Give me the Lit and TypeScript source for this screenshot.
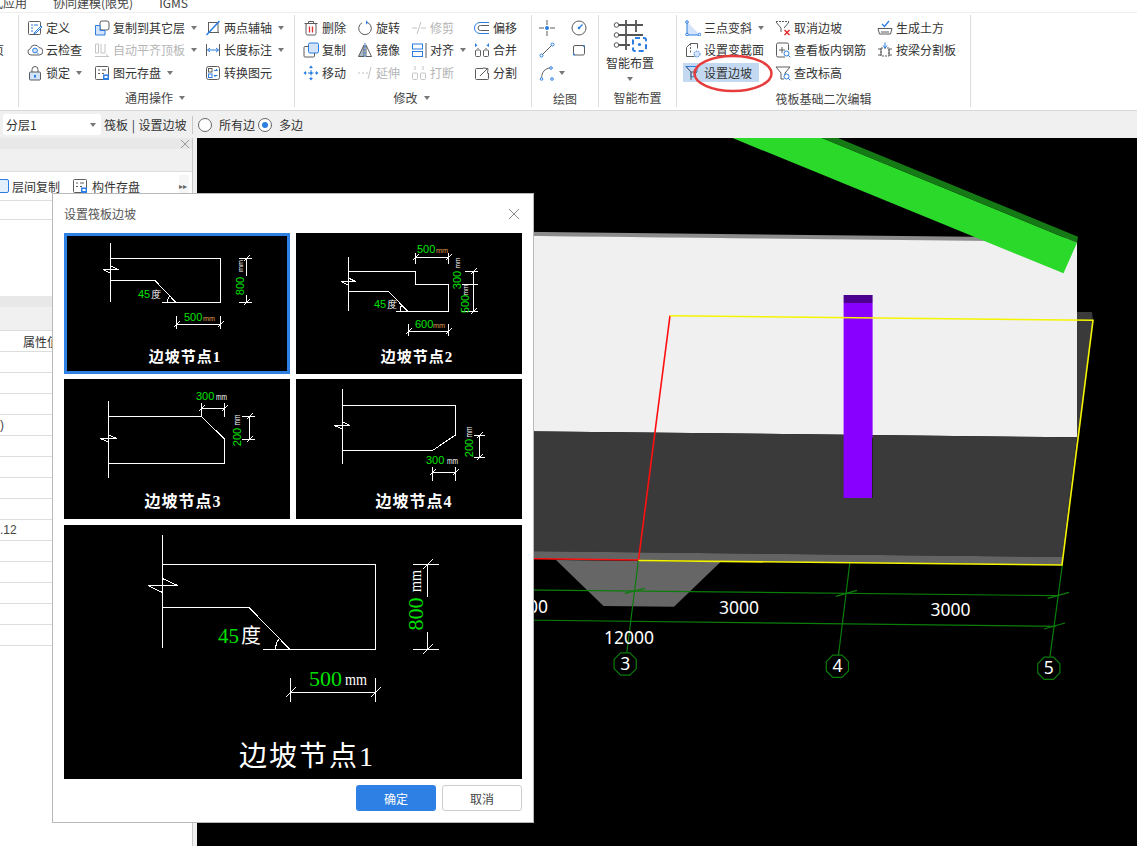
import { LitElement, html, svg, css, nothing } from "lit";
import { customElement } from "lit/decorators.js";

const D = "#5c5c5c";
const B = "#2b7de0";
const L = "#d3e4fa";
const G = "#c4c4c4";

const ICONS: Record<string, any> = {
  define: svg`<rect x="1.5" y="1.5" width="12" height="13" rx="1" fill="none" stroke="${D}"/><path d="M4 5h2M7 5h4M4 8h2M4 11h2" stroke="${B}" fill="none"/><path d="M8 12l6-6 1 1-6 6-2 .5z" fill="#fff" stroke="${B}"/>`,
  cloud: svg`<path d="M4 13a3.2 3.2 0 0 1-.6-6.3A4.6 4.6 0 0 1 12 5.6 3.7 3.7 0 0 1 12.2 13z" fill="none" stroke="${D}"/><circle cx="8" cy="8.5" r="2.4" fill="${L}" stroke="${B}"/><path d="M10 10.5l1.8 1.8" stroke="${B}"/>`,
  lock: svg`<path d="M5 7V4.5a3 3 0 0 1 6 0V7" fill="none" stroke="${D}"/><rect x="2.5" y="7" width="11" height="8" rx="1" fill="${L}" stroke="${D}"/><path d="M8 10v2.5" stroke="${B}" stroke-width="2"/>`,
  copyLayer: svg`<rect x="6" y="1" width="9" height="9" rx="2" fill="#fff" stroke="${D}"/><path d="M1.5 5.5h4.5v5h5v4.500h-9.500z" fill="${L}" stroke="${B}"/>`,
  autoAlign: svg`<path d="M1.500 2v9M1.500 2h3v9h-3M7 2v9h4V2M1 14.500h14M12 12l2 2.500" stroke="${G}" fill="none"/>`,
  saveEl: svg`<rect x="1.500" y="1.500" width="13" height="13" rx="1" fill="none" stroke="${D}"/><path d="M4 5h2M8 5h4M4 8.500h2M8 8.500h2" stroke="${D}"/><rect x="9" y="9.500" width="6" height="5.500" fill="${B}"/><rect x="10.500" y="11" width="3" height="2" fill="#fff"/>`,
  twoAxis: svg`<path d="M3 2.500h11M3 12.500h11M13 2v11M3.500 2v11" stroke="${D}" fill="none"/><path d="M1.500 15L14.500 1" stroke="${B}" stroke-width="1.500"/>`,
  lenDim: svg`<path d="M1.500 2v12M14.500 2v12" stroke="${D}"/><path d="M2.500 8h11M5 6L2.500 8 5 10M11 6l2.500 2L11 10" fill="none" stroke="${B}"/>`,
  convert: svg`<rect x="1.500" y="1.500" width="13" height="13" rx="2" fill="none" stroke="${D}"/><rect x="3.500" y="3.500" width="3.500" height="3.500" fill="none" stroke="${D}"/><rect x="3.500" y="9" width="3.500" height="3.500" fill="none" stroke="${B}"/><path d="M9 5.500h3.500M12.500 5.500l-1.500-1.500M12.500 10.500H9M9 10.500l1.500 1.500" fill="none" stroke="${B}"/>`,
  del: svg`<path d="M1.500 3.500h13M5.500 3.500V1.500h5v2" fill="none" stroke="${D}"/><rect x="3" y="3.500" width="10" height="11.500" rx="1.500" fill="none" stroke="${D}"/><path d="M6.500 6.500v6M9.500 6.500v6" stroke="#e03030" stroke-width="1.300"/>`,
  rotate: svg`<path d="M9.500 2.200A6.300 6.300 0 1 1 5 2.800" fill="none" stroke="${D}"/><path d="M9 .5l2.200 2-2.200 2z" fill="${B}"/>`,
  trim: svg`<path d="M1 8h5M10 8h5M10 2L6 14" stroke="${G}" fill="none"/>`,
  offset: svg`<path d="M15 2.500H6a5.500 5.500 0 0 0 0 11h9" fill="none" stroke="${B}"/><path d="M15 5.500H6.500a2.500 2.500 0 0 0 0 5H15" fill="none" stroke="${D}"/>`,
  copy: svg`<rect x="5.500" y="1" width="10" height="10" rx="1.500" fill="${L}" stroke="${B}"/><path d="M5.500 4.500H2a1 1 0 0 0-1 1V14a1 1 0 0 0 1 1h8.500a1 1 0 0 0 1-1v-3" fill="none" stroke="${D}"/>`,
  mirror: svg`<path d="M7 3L1.500 14.500H7z" fill="#a9b9cc" stroke="${D}"/><path d="M9 3l5.500 11.500H9z" fill="#fff" stroke="${D}"/><path d="M8 1v15" stroke="${B}" stroke-dasharray="2 1"/>`,
  align: svg`<rect x="1.500" y="2" width="10" height="5" fill="none" stroke="${B}"/><rect x="1.500" y="9.500" width="10" height="5" fill="none" stroke="${B}"/><path d="M15 1v15" stroke="${D}"/>`,
  merge: svg`<path d="M1 1l2.500 2.500L1 5zM15 1l-2.500 2.500L15 5z" fill="${B}"/><rect x="1.500" y="8" width="5" height="6.500" rx="1" fill="none" stroke="${D}"/><rect x="9.500" y="8" width="5" height="6.500" rx="1" fill="none" stroke="${D}"/><path d="M4 6v1M12 6v1" stroke="${D}"/>`,
  move: svg`<path d="M8 1.500v13M1.500 8h13" stroke="${B}" stroke-dasharray="2 1.500"/><path d="M8 .5l2 2.500H6zM8 15.500L6 13h4zM.5 8L3 6v4zM15.500 8L13 10V6z" fill="${B}"/><circle cx="8" cy="8" r="1.200" fill="${B}"/>`,
  extend: svg`<path d="M1 8h2M5 8h2M9 8h2M14 2l-3 12" stroke="${G}" fill="none"/>`,
  breakIt: svg`<path d="M4 1v4M12 1v4" stroke="${G}"/><rect x="1.500" y="8" width="5" height="6.500" rx="1" fill="none" stroke="${G}"/><rect x="9.500" y="8" width="5" height="6.500" rx="1" fill="none" stroke="${G}"/>`,
  split: svg`<path d="M9 3.500H2.500a1 1 0 0 0-1 1v9a1 1 0 0 0 1 1h11a1 1 0 0 0 1-1V8" fill="none" stroke="${D}"/><path d="M6 11l7-7M9 3l5 .5-.5 5" fill="none" stroke="${D}"/>`,
  point: svg`<path d="M0 8h5M11 8h5M8 0v5M8 11v5" stroke="${D}"/><circle cx="8" cy="8" r="2" fill="${B}"/>`,
  measure: svg`<circle cx="8" cy="8" r="7" fill="none" stroke="${D}"/><path d="M8 8l3.500-3.500" stroke="${B}" stroke-width="1.300"/><circle cx="8" cy="8" r="1.300" fill="${B}"/>`,
  line: svg`<path d="M2.500 13.500l11-11" stroke="${D}"/><circle cx="2.500" cy="13.500" r="1.500" fill="#fff" stroke="${B}"/><circle cx="13.500" cy="2.500" r="1.500" fill="#fff" stroke="${B}"/>`,
  rect: svg`<rect x="2.500" y="3.500" width="11" height="9.500" rx="1.500" fill="none" stroke="${D}"/><circle cx="13" cy="4" r="1" fill="${B}"/><circle cx="3" cy="12.500" r="1" fill="${B}"/>`,
  arc: svg`<path d="M2.500 14C2.500 7 6 3.500 11 3" fill="none" stroke="${D}"/><circle cx="2.500" cy="14" r="1.300" fill="#fff" stroke="${B}"/><circle cx="12" cy="3" r="1.300" fill="#fff" stroke="${B}"/><circle cx="13" cy="14" r="1.300" fill="#fff" stroke="${B}"/>`,
  threePt: svg`<path d="M2 1.500V15h13z" fill="${L}"/><path d="M2 1.500V15h13" fill="none" stroke="${B}"/><circle cx="2" cy="2" r="1.300" fill="#fff" stroke="${B}"/><circle cx="2" cy="14.500" r="1.300" fill="#fff" stroke="${B}"/><circle cx="14.500" cy="14.500" r="1.300" fill="#fff" stroke="${B}"/>`,
  cancel: svg`<path d="M1 1.500h13" stroke="${D}" stroke-dasharray="2 1"/><path d="M1 2l5 6v4M14 2L9 8" fill="none" stroke="${D}"/><path d="M9.500 10l5 5M14.500 10l-5 5" stroke="#e02020" stroke-width="1.300"/>`,
  earth: svg`<path d="M1 8.500h14l-1.500 5.500h-11z" fill="none" stroke="${D}"/><path d="M4 12h8" stroke="${D}"/><path d="M5 4l2.500 2.500L12 1" fill="none" stroke="${B}" stroke-width="1.300"/>`,
  section: svg`<path d="M1.500 5.500l4-4h7v5M1.500 5.500v9h8" fill="none" stroke="${D}"/><path d="M5.500 1.500v9" stroke="${D}" stroke-dasharray="2 1.500"/><circle cx="12" cy="12" r="3" fill="${L}" stroke="${B}" stroke-dasharray="1.500 1"/>`,
  rebar: svg`<path d="M10 15H3a1.500 1.500 0 0 1-1.500-1.500v-11A1.500 1.500 0 0 1 3 1h9a1.500 1.500 0 0 1 1.500 1.500V8" fill="none" stroke="${D}"/><path d="M4 8h6M7 5v6" stroke="${D}"/><circle cx="11.500" cy="11.500" r="2.500" fill="#fff" stroke="${B}"/><path d="M13.300 13.300l2 2" stroke="${B}"/>`,
  beamSplit: svg`<path d="M1 7h3v6H1M15 7h-3v6h3" fill="none" stroke="${D}"/><rect x="4" y="6" width="8" height="8" fill="none" stroke="${D}" stroke-dasharray="2 1"/><path d="M8 .5V6M6 3.500L8 6l2-2.500" fill="none" stroke="${B}"/>`,
  slope: svg`<path d="M1 1.500h11v5L8 12H6V7L1 1.500z" fill="none" stroke="${B}"/><path d="M1 1.500L6 7h6" fill="none" stroke="${D}"/><path d="M6 7v8" stroke="${D}"/>`,
  elev: svg`<path d="M1 2h14L10 8v3" fill="none" stroke="${D}"/><path d="M1 2l5 6v6h3" fill="none" stroke="${D}"/><circle cx="11.500" cy="11.500" r="2.500" fill="#fff" stroke="${B}"/><path d="M13.300 13.300l2 2" stroke="${B}"/>`,
};

const icon = (n: string) => html`<svg class="ic" viewBox="0 0 16 16">${ICONS[n]}</svg>`;

type Btn = [string, string, boolean?, string?];
interface Group {
  cols: string;
  pad: number;
  width: number;
  foot: string;
  caret?: boolean;
  low?: boolean;
  items: Btn[];
}

const GROUPS: Group[] = [
  {
    cols: "67px 111px 89px", pad: 8, width: 275, foot: "通用操作", caret: true,
    items: [
      ["define", "定义"], ["cloud", "云检查"], ["lock", "锁定", true],
      ["copyLayer", "复制到其它层", true], ["autoAlign", "自动平齐顶板", true, "off"], ["saveEl", "图元存盘", true],
      ["twoAxis", "两点辅轴", true], ["lenDim", "长度标注", true], ["convert", "转换图元"],
    ],
  },
  {
    cols: "54px 54px 63px 57px", pad: 8, width: 236, foot: "修改", caret: true,
    items: [
      ["del", "删除"], ["copy", "复制"], ["move", "移动"],
      ["rotate", "旋转"], ["mirror", "镜像"], ["extend", "延伸", false, "off"],
      ["trim", "修剪", false, "off"], ["align", "对齐", true], ["breakIt", "打断", false, "off"],
      ["offset", "偏移"], ["merge", "合并"], ["split", "分割"],
    ],
  },
];

const GROUP5: Group = {
  cols: "90px 102px 90px", pad: 8, width: 293, foot: "筏板基础二次编辑", low: true,
  items: [
    ["threePt", "三点变斜", true], ["section", "设置变截面"], ["slope", "设置边坡", false, "on"],
    ["cancel", "取消边坡"], ["rebar", "查看板内钢筋"], ["elev", "查改标高"],
    ["earth", "生成土方"], ["beamSplit", "按梁分割板"], ["", ""],
  ],
};

interface T { x: number; y: number; t: string; c?: string; s?: number; r?: boolean; a?: string; w?: number; }
interface Diagram {
  box: [number, number, number, number];
  d: string;
  texts: T[];
  cap: T;
  sel?: boolean;
  big?: boolean;
}

const brk = (x0: number, xv: number, x1: number, y: number, k = 3.5) =>
  `M${x0} ${y}H${x1}M${x0} ${y}L${xv} ${y + k}M${xv} ${y - k}L${x1} ${y}`;
const tk = (x: number, y: number, k = 3) => `M${x - k} ${y + k}L${x + k} ${y - k}`;

const GR = "#00e000";
const OR = "#e0a050";
const W = "#ffffff";

const diagram1 = (big: boolean): Diagram =>
  big
    ? {
        box: [64, 525, 458, 254],
        big: true,
        d:
          "M162.500 535V648M162.500 564.500H375.500V649.500H263M162.500 607.500H249L290 649.500" +
          brk(148, 162.5, 177.5, 585.5, 7) +
          "M413 564.500H439M413 649.500H439M427.500 564.500V597M427.500 632V649.500" +
          tk(427.5, 564.5, 5) + tk(427.5, 649.5, 5) +
          "M290.500 678V702M375.500 678V702M290.500 692.500H375.500" +
          tk(290.5, 692.5, 5) + tk(375.5, 692.5, 5) +
          "M279 639a12 12 0 0 0-3 10",
        texts: [
          { x: 218, y: 643, t: "45", c: GR, s: 21 },
          { x: 241, y: 643, t: "度", c: W, s: 20 },
          { x: 309, y: 686, t: "500", c: GR, s: 22 },
          { x: 345, y: 685, t: "mm", c: W, s: 17, w: 22 },
          { x: 423, y: 614, t: "800", c: GR, s: 22, r: true, a: "middle" },
          { x: 421, y: 581, t: "mm", c: W, s: 17, r: true, a: "middle", w: 22 },
        ],
        cap: { x: 307, y: 766, t: "边坡节点1", s: 28 },
      }
    : {
        box: [64, 233, 226, 141],
        sel: true,
        d:
          "M110.500 243V302M110.500 258.500H220.500V302.500H162M110.500 280.500H155L175.500 302" +
          brk(103, 110.5, 118.5, 269.5) +
          "M239 258.500H252M239 302.500H252M246.500 258.500V276M246.500 295V302.500" +
          tk(246.5, 258.5) + tk(246.5, 302.5) +
          "M176.500 316V329M220.500 316V329M176.500 324.500H220.500" + tk(176.5, 324.5) + tk(220.5, 324.5) +
          "M170 296a6 6 0 0 0-2 6",
        texts: [
          { x: 138, y: 298, t: "45", c: GR, s: 11 },
          { x: 151, y: 298, t: "度", c: W, s: 10 },
          { x: 184, y: 321, t: "500", c: GR, s: 11 },
          { x: 203, y: 321, t: "mm", c: OR, s: 8, w: 12 },
          { x: 244, y: 286, t: "800", c: GR, s: 11, r: true, a: "middle" },
          { x: 243, y: 266, t: "mm", c: W, s: 8, r: true, a: "middle", w: 12 },
        ],
        cap: { x: 185, y: 362, t: "边坡节点1" },
      };

const DIAGRAMS: Diagram[] = [
  diagram1(false),
  {
    box: [296, 233, 226, 141],
    d:
      "M348.500 257V311M348.500 271.500H415.500V284.500H448.500V311.500H396M348.500 291.500H388.500L407.500 311" +
      brk(341, 348.5, 355.5, 281.5) +
      "M415.500 253V264M448.500 253V264M415.500 257.500H448.500" + tk(415.5, 257.5) + tk(448.5, 257.5) +
      "M408.500 324V336M448.500 324V336M408.500 331.500H448.500" + tk(408.5, 331.5) + tk(448.5, 331.5) +
      "M465 271.500H478M462 284.500H478M462 311.500H478M473.500 271.500V311.500" + tk(473.5, 271.5) + tk(473.5, 311.5) +
      "M402 305a6 6 0 0 0-1 6",
    texts: [
      { x: 417, y: 253, t: "500", c: GR, s: 11 },
      { x: 436, y: 253, t: "mm", c: OR, s: 8, w: 12 },
      { x: 415, y: 328, t: "600", c: GR, s: 11 },
      { x: 433, y: 328, t: "mm", c: OR, s: 8, w: 12 },
      { x: 374, y: 308, t: "45", c: GR, s: 11 },
      { x: 387, y: 308, t: "度", c: W, s: 10 },
      { x: 461, y: 280, t: "300", c: GR, s: 11, r: true, a: "middle" },
      { x: 460, y: 263, t: "mm", c: W, s: 8, r: true, a: "middle", w: 11 },
      { x: 469, y: 304, t: "500", c: GR, s: 11, r: true, a: "middle" },
      { x: 468, y: 290, t: "mm", c: W, s: 8, r: true, a: "middle", w: 11 },
    ],
    cap: { x: 417, y: 362, t: "边坡节点2" },
  },
  {
    box: [64, 379, 226, 140],
    d:
      "M108.500 401V478M108.500 416.500H201.500L224.500 439V463.500H108.500" +
      brk(100, 108.5, 117, 438.5) +
      "M201.500 403V417M224.500 403V417M201.500 408.500H224.500" + tk(201.5, 408.5) + tk(224.5, 408.5) +
      "M242 416.500H255M242 439.500H255M249.500 416.500V439.500" + tk(249.5, 416.5) + tk(249.5, 439.5),
    texts: [
      { x: 196, y: 400, t: "300", c: GR, s: 11 },
      { x: 216, y: 400, t: "mm", c: W, s: 9, w: 11 },
      { x: 241, y: 437, t: "200", c: GR, s: 11, r: true, a: "middle" },
      { x: 240, y: 420, t: "mm", c: W, s: 9, r: true, a: "middle", w: 11 },
    ],
    cap: { x: 183, y: 507, t: "边坡节点3", s: 16 },
  },
  {
    box: [296, 379, 226, 140],
    d:
      "M342.500 389V464M342.500 405.500H455.500V435L432.500 450.500H342.500" +
      brk(334, 342.5, 350, 425.5) +
      "M474 435.500H485M474 457.500H485M479.500 435.500V457.500" + tk(479.5, 435.5) + tk(479.5, 457.5) +
      "M432.500 467V481M455.500 467V481M432.500 472.500H455.500" + tk(432.5, 472.5) + tk(455.5, 472.5),
    texts: [
      { x: 426, y: 464, t: "300", c: GR, s: 11 },
      { x: 447, y: 464, t: "mm", c: W, s: 9, w: 11 },
      { x: 473, y: 448, t: "200", c: GR, s: 11, r: true, a: "middle" },
      { x: 472, y: 432, t: "mm", c: W, s: 9, r: true, a: "middle", w: 11 },
    ],
    cap: { x: 414, y: 507, t: "边坡节点4", s: 16 },
  },
];

const drawDiagram = (g: Diagram) => {
  const [x, y, w, h] = g.box;
  return html`<svg class="dg ${g.big ? "big" : ""}" width=${w} height=${h} viewBox="${x} ${y} ${w} ${h}">
    <rect x=${x} y=${y} width=${w} height=${h} fill="#000"></rect>
    <path d=${g.d} fill="none" stroke="#fff" shape-rendering="crispEdges"></path>
    ${g.texts.map((t) =>
      t.w
        ? svg`<text x=${t.x} y=${t.y} fill=${t.c} font-size=${t.s} textLength=${t.w} lengthAdjust="spacingAndGlyphs"
        text-anchor=${t.a ?? "start"} transform=${t.r ? `rotate(-90 ${t.x} ${t.y})` : ""}>${t.t}</text>`
        : svg`<text x=${t.x} y=${t.y} fill=${t.c} font-size=${t.s}
        text-anchor=${t.a ?? "start"} transform=${t.r ? `rotate(-90 ${t.x} ${t.y})` : ""}>${t.t}</text>`
    )}
    <text class="cap" x=${g.cap.x} y=${g.cap.y} text-anchor="middle" fill="#fff" font-size=${g.cap.s ?? 15}>${g.cap.t}</text>
  </svg>`;
};

const HEX = (cx: number, cy: number, r: number) => {
  const p: string[] = [];
  for (let i = 0; i < 8; i++) {
    const a = Math.PI / 8 + (i * Math.PI) / 4;
    p.push(`${(cx + r * Math.cos(a)).toFixed(1)},${(cy + r * Math.sin(a)).toFixed(1)}`);
  }
  return p.join(" ");
};

const AXES: [number, number, string][] = [
  [625.2, 664, "3"],
  [837.4, 666.3, "4"],
  [1048.8, 668.3, "5"],
];

@customElement("app-root")
export class AppRoot extends LitElement {
  static styles = css`
    :host {
      display: block;
      position: relative;
      width: 1137px;
      height: 846px;
      overflow: hidden;
      background: #f0f0f0;
      font-family: "Noto Sans CJK SC", "Liberation Sans", sans-serif;
      font-size: 12px;
      color: #333;
    }
    .tabs {
      display: flex;
      gap: 26px;
      height: 12px;
      background: #fff;
      border-bottom: 1px solid #eee;
      overflow: hidden;
      line-height: 6px;
      color: #444;
    }
    .tabs span:first-child { margin-left: -9px; }
    .ribbon {
      display: flex;
      height: 98px;
      background: #fff;
      border-bottom: 1px solid #d8d8d8;
      box-sizing: border-box;
    }
    .stub {
      width: 18px;
      margin-top: 2px;
      height: 92px;
      border-right: 1px solid #ddd;
      overflow: hidden;
      box-sizing: content-box;
    }
    .stub span { display: block; margin: 26px 0 0 -8px; line-height: 18px; }
    .group {
      display: flex;
      flex-direction: column;
      margin-top: 2px;
      height: 92px;
      border-right: 1px solid #ddd;
      box-sizing: content-box;
    }
    .cols {
      display: grid;
      grid-template-rows: 22px 22px 23px;
      grid-auto-flow: column;
      padding-top: 2px;
    }
    .btn {
      display: flex;
      align-items: center;
      gap: 3px;
      white-space: nowrap;
      line-height: 16px;
    }
    .btn.off { color: #b5b5b5; }
    .btn.on {
      background: #c3d9f1;
      margin-left: -2px;
      padding-left: 2px;
      width: 74px;
      height: 19px;
      align-self: center;
    }
    .ic { width: 16px; height: 16px; flex: none; }
    .caret {
      width: 0;
      height: 0;
      border: 3px solid transparent;
      border-top: 4px solid #777;
      border-bottom: 0;
      margin-left: 6px;
      flex: none;
    }
    .btn .caret { margin-left: 3px; }
    .draw .btn .caret { margin-left: 1px; }
    .foot {
      display: flex;
      align-items: center;
      justify-content: center;
      flex: 1;
      padding-top: 4px;
      color: #444;
    }
    .foot.shift { padding-right: 3px; }
    .foot.low { padding-top: 6px; }
    .draw { width: 66px; }
    .draw .cols { grid-template-columns: 32px 27px; padding-left: 7px; }
    .smart { width: 77px; }
    .bigbtn {
      display: flex;
      flex-direction: column;
      align-items: center;
      width: 48px;
      margin-left: 7px;
      height: 67px;
      padding-top: 4px;
      line-height: 18px;
      box-sizing: border-box;
    }
    .bigbtn svg { width: 34px; height: 34px; margin-bottom: 1px; flex: none; }
    .bigbtn .caret { margin: 5px 0 0; }
    .toolbar {
      display: flex;
      align-items: center;
      height: 27px;
      background: #f0f0f0;
      padding-left: 3px;
    }
    .select {
      display: flex;
      align-items: center;
      justify-content: space-between;
      width: 98px;
      height: 21px;
      padding: 0 5px 0 3px;
      box-sizing: border-box;
      background: #fff;
      border-radius: 3px;
    }
    .select .caret { margin: 0; }
    .crumb { margin-left: 3px; width: 84px; white-space: nowrap; word-spacing: 1px; }
    .vsep { width: 1px; height: 18px; background: #c8c8c8; margin: 0 5px 0 4px; }
    .radio {
      display: inline-flex;
      align-items: center;
      justify-content: center;
      width: 12px;
      height: 12px;
      border: 1px solid #666;
      border-radius: 50%;
      background: #fff;
      flex: none;
    }
    .radio i { width: 6px; height: 6px; border-radius: 50%; background: #2b7de0; }
    .rl { margin: 0 3px 0 7px; }
    .rl2 { margin-left: 7px; }
    .main { display: flex; height: 708px; }
    .panel {
      width: 192px;
      height: 708px;
      background: #fff;
      border-right: 1px solid #c8c8c8;
      display: flex;
      flex-direction: column;
      flex: none;
    }
    .gap { width: 4px; flex: none; background: #f0f0f0; }
    .phead { height: 11px; background: #e8e8e8; display: flex; justify-content: flex-end; flex: none; }
    .phead svg { width: 8px; height: 8px; margin: 2px 3px 0 0; }
    .pgray { height: 23px; background: #f0f0f0; border-bottom: 1px solid #ddd; box-sizing: border-box; flex: none; }
    .pgray.tall { height: 24px; }
    .ptools { height: 29px; display: flex; align-items: center; border-bottom: 1px solid #ddd; box-sizing: border-box; flex: none; position: relative; }
    .ptools .chk { width: 12px; height: 12px; margin-left: -5px; border: 1px solid #2b7de0; border-radius: 2px; background: #e4effc; flex: none; }
    .ptools .t1 { margin-left: 3px; }
    .ptools .t2 { margin-left: 12px; display: flex; gap: 4px; align-items: center; }
    .ptools .more { margin-left: auto; margin-right: 3px; font-size: 8px; color: #666; width: 10px; height: 22px; line-height: 22px; background: #f6f6f6; }
    .prow { height: 21px; display: flex; align-items: center; border-bottom: 1px solid #ddd; box-sizing: border-box; flex: none; white-space: nowrap; }
    .prow.short { height: 19px; }
    .pspace { height: 76px; flex: none; }
    .attr { padding-left: 23px; }
    .num { font-family: "Liberation Sans", sans-serif; font-size: 12px; color: #444; }
    .canvas { flex: 1; display: block; width: 940px; height: 708px; background: #000; }
    .canvas text { font-family: "Noto Sans", sans-serif; font-size: 17.5px; fill: #fff; }
    .dialog {
      position: absolute;
      left: 52px;
      top: 193px;
      width: 482px;
      height: 630px;
      box-sizing: border-box;
      background: #fff;
      border: 1px solid #b8b8b8;
      padding: 0 11px;
      display: flex;
      flex-direction: column;
    }
    .dhead {
      height: 39px;
      display: flex;
      align-items: center;
      justify-content: space-between;
      flex: none;
      color: #555;
    }
    .dhead svg { width: 12px; height: 12px; margin-right: 2px; }
    .thumbs { display: grid; grid-template-columns: 226px 226px; column-gap: 6px; row-gap: 5px; }
    .tb { position: relative; display: block; line-height: 0; }
    .tb.sel::after {
      content: "";
      position: absolute;
      inset: 0;
      border: 3px solid #2f80e4;
      pointer-events: none;
    }
    .dg { display: block; }
    .dg text { font-family: "Liberation Sans", sans-serif; }
    .dg .cap { font-family: "Liberation Serif", "Noto Sans CJK SC", serif; font-weight: 700; letter-spacing: 1px; }
    .dg.big text { font-family: "Liberation Serif", "Noto Sans CJK SC", serif; }
    .dg.big .cap { font-weight: 400; letter-spacing: 2px; }
    .preview { margin-top: 6px; line-height: 0; }
    .dfoot { display: flex; justify-content: flex-end; gap: 6px; margin-top: 6px; }
    .b {
      width: 80px;
      height: 26px;
      box-sizing: border-box;
      border-radius: 3px;
      display: flex;
      align-items: center;
      justify-content: center;
    }
    .b.pri { background: #2f80e4; color: #fff; }
    .b.sec { background: #fff; border: 1px solid #ccc; color: #444; }
    .ring {
      position: absolute;
      left: 693px;
      top: 54px;
      width: 80px;
      height: 39px;
      pointer-events: none;
    }
  `;

  private renderButton(b: Btn) {
    if (!b[0]) return html`<div></div>`;
    return html`<div class="btn ${b[3] ?? ""}">${icon(b[0])}<span>${b[1]}</span>${b[2] ? html`<i class="caret"></i>` : nothing}</div>`;
  }

  private renderGroup(g: Group) {
    return html`<div class="group" style="width:${g.width}px">
      <div class="cols" style="grid-template-columns:${g.cols};padding-left:${g.pad}px">
        ${g.items.map((b) => this.renderButton(b))}
      </div>
      <div class="foot ${g.low ? "low" : ""} ${g.caret ? "shift" : ""}">${g.foot}${g.caret ? html`<i class="caret"></i>` : nothing}</div>
    </div>`;
  }

  private renderCanvas() {
    const green = "#0b7d0b";
    return html`<svg class="canvas" viewBox="197 138 940 708">
      <polygon points="520,231.800 1077,237.800 1077,243 520,236" fill="#8c8c8c"></polygon>
      <polygon points="520,235.800 1077,241.800 1077,437.300 520,431.200" fill="#f0f0f0"></polygon>
      <polygon points="520,431.200 1077,437.300 1062,557 520,551" fill="#3a3a3a"></polygon>
      <polygon points="1077,312 1092,312 1093,320 1062,565 1062,556 1077,437" fill="#3a3a3a"></polygon>
      <polygon points="520,551 1062,557 1062,565 520,558.500" fill="#636363"></polygon>
      <polygon points="556,560 720.500,562 674,606.700 603.500,606" fill="#666"></polygon>
      <polygon points="732.500,138 822,138 1077,242.700 1063.500,273.300" fill="#2bd92b"></polygon>
      <polygon points="822,138 838,138 1078,236.700 1077,242.700" fill="#157a15"></polygon>
      <rect x="843.600" y="295" width="29" height="8" fill="#4b0090"></rect>
      <rect x="843.600" y="303" width="29" height="195" fill="#8800ff"></rect>
      <rect x="872" y="438" width="1" height="60" fill="#222"></rect>
      <g stroke=${green} stroke-width="1.200" fill="none">
        <path d="M638.400 560L626.800 652.700M849.800 563L838.500 655M1062.300 565L1050 656.700"></path>
        <path d="M520 589.800L1058.500 595.700M520 620L1055.700 626.300"></path>
        <path d="M624.800 593.300L645 588.300M835.800 596.300L857 590.300M1047.600 598.300L1069 592.300M1044 629L1065 623"></path>
        ${AXES.map(([x, y]) => svg`<polygon points=${HEX(x, y, 12)}></polygon>`)}
      </g>
      <g fill="none" stroke-width="1.600">
        <path d="M670 315.700L638.500 560M520 558.500L638.500 560" stroke="#ff1010"></path>
        <path d="M670 315.700L1093 320.300L1062 565L638.500 560.500" stroke="#f5f500"></path>
      </g>
      <text x="508" y="613">3000</text>
      <text x="719" y="613.500">3000</text>
      <text x="930.500" y="616">3000</text>
      <text x="604" y="643.500">12000</text>
      ${AXES.map(([x, y, t]) => svg`<text x=${x} y=${y + 6} text-anchor="middle">${t}</text>`)}
    </svg>`;
  }

  render() {
    const rows = Array.from({ length: 14 });
    return html`
      <div class="tabs"><span>式应用</span><span>协同建模(限免)</span><span>IGMS</span></div>
      <div class="ribbon">
        <div class="stub"><span>页</span></div>
        ${GROUPS.map((g) => this.renderGroup(g))}
        <div class="group draw">
          <div class="cols">
            <div class="btn">${icon("point")}</div>
            <div class="btn">${icon("line")}</div>
            <div class="btn">${icon("arc")}<i class="caret"></i></div>
            <div class="btn">${icon("measure")}</div>
            <div class="btn">${icon("rect")}</div>
          </div>
          <div class="foot low">绘图</div>
        </div>
        <div class="group smart">
          <div class="bigbtn">
            <svg viewBox="0 0 34 34">
              <path d="M5 6h25M5 16h25M5 26h12M13 1v30M23 1v12" stroke="#555" stroke-width="1.800" fill="none"></path>
              <circle cx="3.500" cy="6" r="2.300" fill="#fff" stroke="#555"></circle>
              <circle cx="3.500" cy="16" r="2.300" fill="#fff" stroke="#555"></circle>
              <circle cx="3.500" cy="26" r="2.300" fill="#fff" stroke="#555"></circle>
              <rect x="20" y="19" width="13" height="13" rx="2" fill="#fff" stroke="#2b7de0" stroke-width="2" stroke-dasharray="5 3"></rect>
              <circle cx="26.500" cy="25.500" r="1.600" fill="#2b7de0"></circle>
            </svg>
            <span>智能布置</span><i class="caret"></i>
          </div>
          <div class="foot low">智能布置</div>
        </div>
        ${this.renderGroup(GROUP5)}
      </div>
      <div class="toolbar">
        <div class="select"><span>分层1</span><i class="caret"></i></div>
        <span class="crumb">筏板 | 设置边坡</span>
        <span class="vsep"></span>
        <span class="radio"></span><span class="rl">所有边</span>
        <span class="radio"><i></i></span><span class="rl2">多边</span>
      </div>
      <div class="main">
        <div class="panel">
          <div class="phead"><svg viewBox="0 0 8 8"><path d="M0 0l8 8M8 0L0 8" stroke="#999"></path></svg></div>
          <div class="pgray"></div>
          <div class="ptools">
            <span class="chk"></span><span class="t1">层间复制</span>
            <span class="t2">${icon("saveEl")}构件存盘</span>
            <span class="more">▸▸</span>
          </div>
          <div class="prow short"></div>
          <div class="pspace"></div>
          <div class="phead"></div>
          <div class="pgray tall"></div>
          <div class="prow attr">属性值</div>
          ${rows.map(
            (_, i) => html`<div class="prow">
              ${i === 3 ? html`<span class="num">)</span>` : nothing}
              ${i === 8 ? html`<span class="num">.12</span>` : nothing}
            </div>`
          )}
        </div>
        <div class="gap"></div>
        ${this.renderCanvas()}
      </div>
      <svg class="ring" viewBox="0 0 80 39">
        <ellipse cx="40" cy="19.500" rx="38.500" ry="17.500" fill="none" stroke="#e63c3c" stroke-width="2.500"></ellipse>
      </svg>
      <div class="dialog">
        <div class="dhead">
          <span>设置筏板边坡</span>
          <svg viewBox="0 0 12 12"><path d="M1 1l10 10M11 1L1 11" stroke="#888"></path></svg>
        </div>
        <div class="thumbs">
          ${DIAGRAMS.map((g) => html`<div class="tb ${g.sel ? "sel" : ""}">${drawDiagram(g)}</div>`)}
        </div>
        <div class="preview">${drawDiagram(diagram1(true))}</div>
        <div class="dfoot">
          <div class="b pri">确定</div>
          <div class="b sec">取消</div>
        </div>
      </div>
    `;
  }
}
